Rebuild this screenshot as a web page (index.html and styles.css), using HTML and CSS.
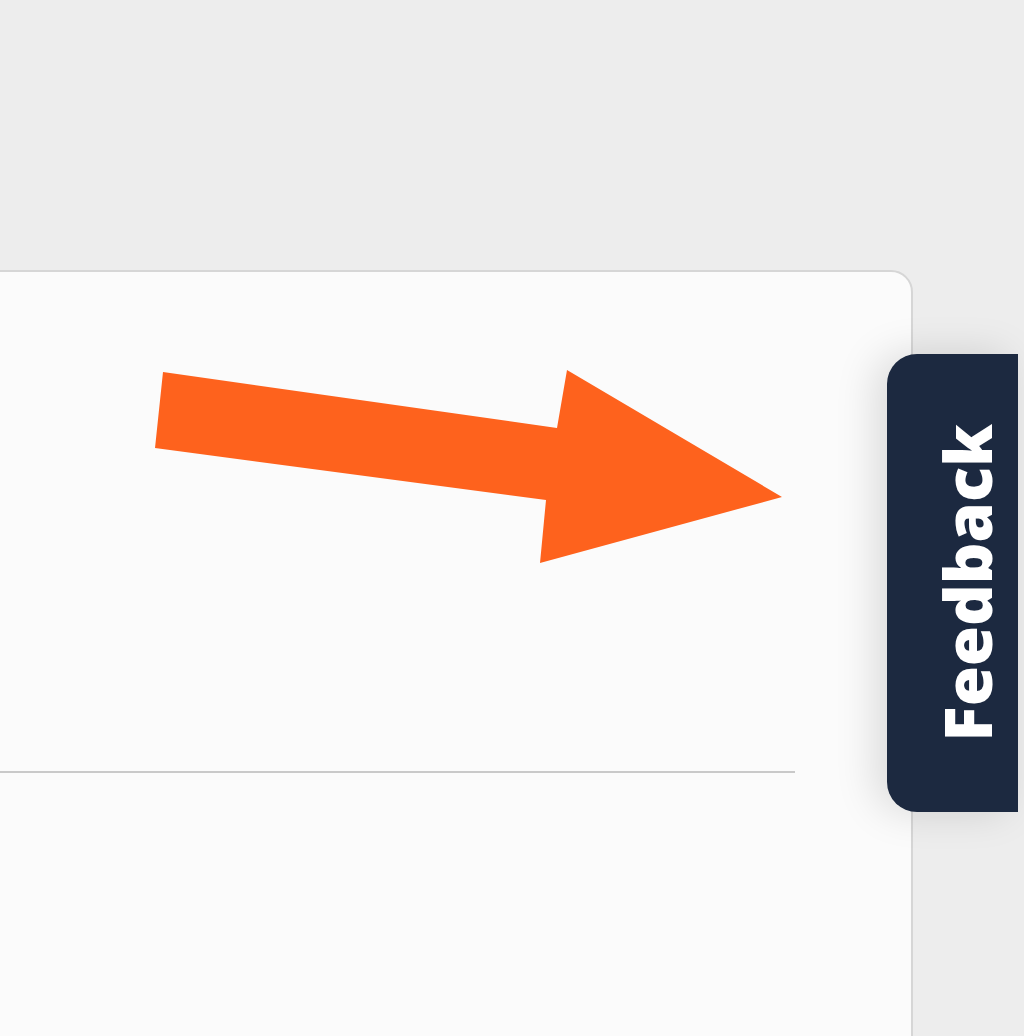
FILE: index.html
```html
<!DOCTYPE html>
<html lang="en">
<head>
<meta charset="utf-8">
<title>Feedback</title>
<link rel="stylesheet" href="styles.css">
</head>
<body>
<main class="card">
  <svg class="arrow" width="640" height="205" viewBox="0 0 640 205" aria-hidden="true">
    <polygon points="13,7 407,63 417,5 632,132 390,198 396,135 5,83" fill="#fe621d"/>
  </svg>
  <hr class="divider">
</main>
<button class="feedback-tab"><span class="feedback-label">Feedback</span></button>
</body>
</html>
```
FILE: styles.css
```css
html, body {
  margin: 0;
  padding: 0;
  height: 100%;
  overflow: hidden;
  background: #ededed;
  font-family: "Open Sans", "Liberation Sans", sans-serif;
}

.card {
  margin-top: 270px;
  margin-left: -30px;
  width: 939px;
  height: 800px;
  background: #fbfbfb;
  border: 2px solid #d6d6d6;
  border-radius: 22px;
  display: flex;
  flex-direction: column;
  align-items: flex-start;
}

.arrow {
  display: block;
  margin-top: 93px;
  margin-left: 178px;
}

.divider {
  margin: 201px 0 0 0;
  width: 823px;
  height: 2px;
  border: 0;
  background: #c9c9c9;
}

.feedback-tab {
  position: fixed;
  left: 887px;
  top: 354px;
  width: 131px;
  height: 458px;
  margin: 0;
  padding: 0 0 0 48px;
  border: 0;
  border-radius: 30px 0 0 30px;
  background: #1c2940;
  box-shadow: -12px 0 40px rgba(0, 0, 0, 0.13);
  display: flex;
  align-items: center;
  justify-content: flex-start;
  box-sizing: border-box;
}

.feedback-label {
  writing-mode: vertical-rl;
  transform: rotate(180deg);
  color: #ffffff;
  font-family: "Open Sans", "Liberation Sans", sans-serif;
  font-weight: 800;
  font-size: 65px;
  line-height: 1;
}
```
